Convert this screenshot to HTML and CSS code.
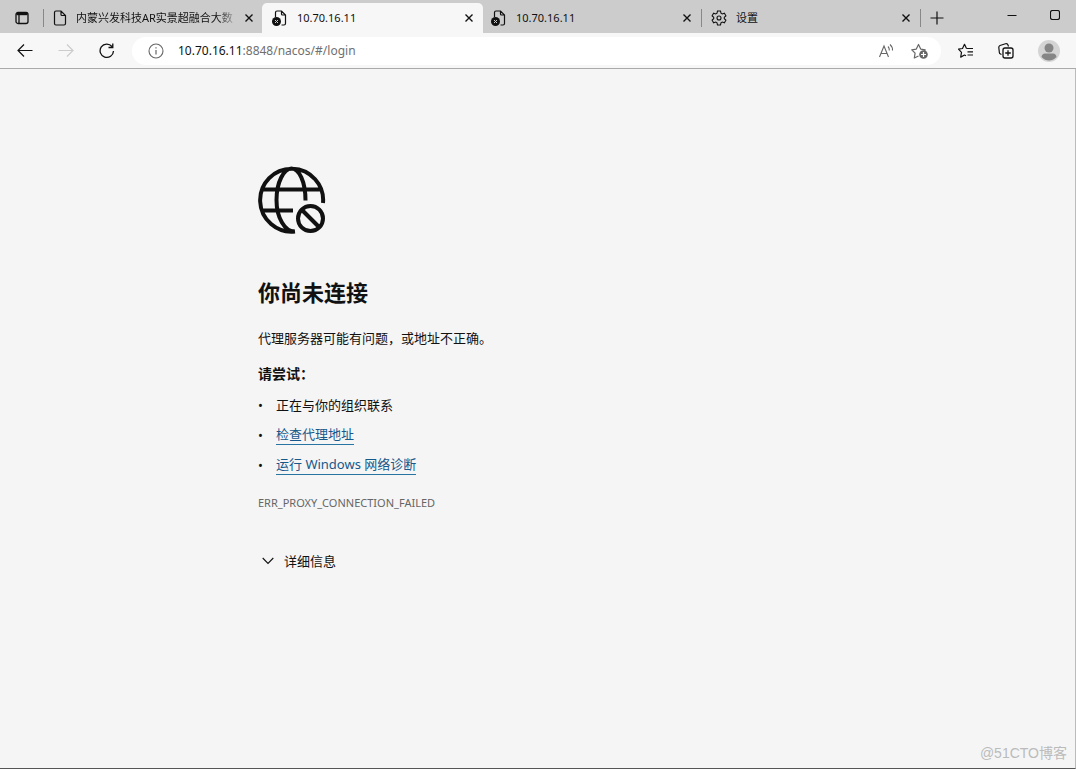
FILE: index.html
```html
<!DOCTYPE html>
<html lang="zh-CN">
<head>
<meta charset="utf-8">
<meta name="viewport" content="width=device-width, initial-scale=1">
<title>10.70.16.11</title>
<link rel="stylesheet" href="styles.css">
</head>
<body>
<svg class="defs" aria-hidden="true">
  <symbol id="close" viewBox="0 0 10 10"><path d="M1.500 1.500l7 7M8.500 1.500l-7 7" stroke-width="1.400"/></symbol>
  <symbol id="blocked-page" viewBox="0 0 16 16">
    <path d="M3.500 7V2.500a1.500 1.500 0 0 1 1.500-1.500h4.500l4 4v8.500a1.500 1.500 0 0 1-1.500 1.500H9.500M9.500 1v3a1 1 0 0 0 1 1h3" stroke-width="1.200"/>
    <circle cx="4.500" cy="11.500" r="4.500" fill="#111" stroke="none"/><path d="M3 10l3 3M6 10l-3 3" stroke="#ccc" stroke-width="1"/>
  </symbol>
</svg>
<header>
  <div class="tabbar">
    <button class="tab-menu" aria-label="标签操作"><svg width="14" height="14" viewBox="0 0 14 14"><rect x="1" y="1.500" width="12" height="11" rx="2" stroke-width="1.300"/><path d="M1.500 3h11" stroke-width="2.400"/><path d="M4 4v8" stroke-width="1.300"/></svg></button>
    <div class="tab first">
      <svg width="16" height="16" viewBox="0 0 16 16"><path d="M4 1h5l4.500 4.500v8A1.500 1.500 0 0 1 12 15H4a1.500 1.500 0 0 1-1.500-1.500v-11A1.500 1.500 0 0 1 4 1zM9 1v3.500a1 1 0 0 0 1 1h3.500" stroke-width="1.200"/></svg>
      <span class="tab-title faded">内蒙兴发科技AR实景超融合大数</span>
      <button class="close" aria-label="关闭"><svg width="10" height="10"><use href="#close"/></svg></button>
    </div>
    <div class="tab active">
      <svg width="16" height="16"><use href="#blocked-page"/></svg>
      <span class="tab-title">10.70.16.11</span>
      <button class="close" aria-label="关闭"><svg width="10" height="10"><use href="#close"/></svg></button>
    </div>
    <div class="tab after-active">
      <svg width="16" height="16"><use href="#blocked-page"/></svg>
      <span class="tab-title">10.70.16.11</span>
      <button class="close" aria-label="关闭"><svg width="10" height="10"><use href="#close"/></svg></button>
    </div>
    <div class="tab divided">
      <svg width="16" height="16" viewBox="0 0 16 16"><path d="M6.500 1h3l.5 2.100 1.300.8 2.100-.7 1.500 2.600-1.600 1.500v1.400l1.600 1.500-1.500 2.600-2.100-.7-1.300.8-.5 2.100h-3L6 12.900l-1.300-.8-2.100.7-1.500-2.600 1.600-1.500V7.300L1.100 5.800l1.500-2.600 2.100.7L6 3.100z" stroke-width="1.100"/><circle cx="8" cy="8" r="2" stroke-width="1.100"/></svg>
      <span class="tab-title">设置</span>
      <button class="close" aria-label="关闭"><svg width="10" height="10"><use href="#close"/></svg></button>
    </div>
    <button class="new-tab" aria-label="新建标签页"><svg width="14" height="14" viewBox="0 0 14 14"><path d="M7 .5v13M.5 7h13" stroke-width="1.200"/></svg></button>
    <div class="window-controls">
      <button aria-label="最小化"><svg width="10" height="10" viewBox="0 0 10 10"><path d="M.5 5.500h9" stroke-width="1"/></svg></button>
      <button aria-label="最大化"><svg width="10" height="10" viewBox="0 0 10 10"><rect x=".5" y=".5" width="9" height="9" rx="2" stroke-width="1.100"/></svg></button>
    </div>
  </div>
  <div class="toolbar">
    <nav class="history">
      <button aria-label="后退"><svg width="16" height="16" viewBox="0 0 16 16"><path d="M15.500 7.500H1M7 1.500l-6 6 6 6" stroke-width="1.200"/></svg></button>
      <button aria-label="前进" disabled><svg width="16" height="16" viewBox="0 0 16 16"><path d="M.5 7.500H15M9 1.500l6 6-6 6" stroke-width="1.200"/></svg></button>
      <button aria-label="刷新"><svg width="16" height="16" viewBox="0 0 16 16"><path d="M14.500 8A6.700 6.700 0 1 1 13 3.500M13.800.5v4H9.500" stroke-width="1.300"/></svg></button>
    </nav>
    <div class="address">
      <svg class="info" width="16" height="16" viewBox="0 0 16 16"><circle cx="8" cy="8" r="7" stroke-width="1.100"/><path d="M8 7v4.500M8 4.200v1.400" stroke-width="1.200"/></svg>
      <a class="url" href="#/login"><span class="host">10.70.16.11</span>:8848/nacos/#/login</a>
      <button aria-label="朗读此页"><svg width="16" height="16" viewBox="0 0 16 16"><path d="M1.500 14L6 3l4.500 11M3 10.500h6M10 3.500q1.500 1.500 1.300 4M12 1.500q2.800 2.500 2.500 6" stroke-width="1.100"/></svg></button>
      <button aria-label="收藏此页"><svg width="18" height="16" viewBox="0 0 18 16"><path d="M7.500 13L3.300 15l.8-4.800L.8 6.800l4.500-.7L7.500 1.500l2.200 4.600 4.500.7-1 1.200" stroke-width="1.200" stroke-linejoin="round"/><circle cx="12.500" cy="11.500" r="4.300" fill="#666" stroke="none"/><path d="M12.500 9v5M10 11.500h5" stroke="#fff" stroke-width="1.200"/></svg></button>
    </div>
    <div class="actions">
      <button aria-label="收藏夹"><svg width="16" height="16" viewBox="0 0 16 16"><path d="M8.500 5.500L6.500 1.300l-2 4.200-4 .7 3 3.100-.8 4.800 3.800-2.100 1.500.8M8.500 5.500H15M9.500 8.800H15M9.500 12H15" stroke-width="1.200" stroke-linejoin="round"/></svg></button>
      <button aria-label="集锦"><svg width="16" height="16" viewBox="0 0 16 16"><path d="M3.500 11.500L2.500 11A2 2 0 0 1 1.300 9L.8 4.500A2 2 0 0 1 2 2.500L7.500.8A2 2 0 0 1 10 2l.5 1.500" stroke-width="1.200"/><rect x="5" y="5" width="10" height="10" rx="2" stroke-width="1.300"/><path d="M10 7.200v5.600M7.200 10h5.600" stroke-width="1.300"/></svg></button>
      <button class="profile" aria-label="个人资料"><svg width="22" height="22" viewBox="0 0 22 22"><g stroke="none"><circle cx="11" cy="11" r="11" fill="#d4d4d4"/><circle cx="11" cy="8" r="4.500" fill="#858585"/><path d="M3.500 17Q4 13.500 7 13.500h8q3 0 3.500 3.500Q15 20.500 11 20.500T3.500 17z" fill="#858585"/></g></svg></button>
    </div>
  </div>
</header>
<main>
  <section class="error">
    <svg class="globe" width="68" height="68" viewBox="0 0 68 68">
      <path d="M65 37A31.500 31.500 0 1 0 37 65.500M4 23.500h60M4 44.500h31M36.500 65.500C27 65.500 18.500 52 18.500 34S26 2.500 33.500 2.500c7.500 0 14 13 14 32" stroke-width="4"/>
      <circle cx="52.500" cy="52.500" r="12.500" stroke-width="4"/><path d="M43.500 43.500l18 18" stroke-width="4"/>
    </svg>
    <h1>你尚未连接</h1>
    <p class="summary">代理服务器可能有问题，或地址不正确。</p>
    <h2>请尝试：</h2>
    <ul>
      <li>正在与你的组织联系</li>
      <li><a href="#proxy">检查代理地址</a></li>
      <li><a href="#diagnose">运行 Windows 网络诊断</a></li>
    </ul>
    <p class="code">ERR_PROXY_CONNECTION_FAILED</p>
    <button class="details"><svg width="12" height="8" viewBox="0 0 12 8"><path d="M.7 1L6 6.500 11.300 1" stroke-width="1.100"/></svg>详细信息</button>
  </section>
  <p class="watermark">@51CTO博客</p>
</main>
</body>
</html>
```

FILE: styles.css
```css
* { box-sizing: border-box; }
body {
  margin: 0;
  min-height: 100vh;
  display: flex;
  flex-direction: column;
  background: #f5f5f5;
  color: #111;
  font: 13px/20px "Noto Sans", "Noto Sans CJK SC", sans-serif;
}
svg { display: block; flex: none; fill: none; stroke: currentColor; }
.defs { position: absolute; width: 0; height: 0; }
button {
  display: flex;
  align-items: center;
  justify-content: center;
  flex: none;
  padding: 0;
  border: 0;
  background: none;
  color: inherit;
  font: inherit;
}
h1, h2, p, ul { margin: 0; padding: 0; }

.tabbar { display: flex; height: 33px; padding-top: 3px; background: #ccc; }
.tab-menu { width: 43px; }
.tab {
  display: flex;
  align-items: center;
  flex: 0 1 219px;
  min-width: 0;
  gap: 9px;
  padding: 0 8px 0 10px;
  font-size: 11px;
}
.tab.first, .tab.divided {
  background: linear-gradient(#888, #888) left center / 1px 18px no-repeat;
}
.tab.first { gap: 8px; padding: 0 7px 0 9px; }
.tab.active { flex-basis: 221px; background: #f7f7f7; border-radius: 5px 5px 0 0; }
.tab.after-active { flex-basis: 218px; padding-left: 8px; }
.tab-title { flex: 1; min-width: 0; overflow: hidden; white-space: nowrap; }
.faded { mask-image: linear-gradient(to right, #000 88%, rgba(0, 0, 0, 0.2)); }
.close { width: 12px; height: 20px; }
.new-tab {
  width: 34px;
  background: linear-gradient(#888, #888) left center / 1px 18px no-repeat;
}
.window-controls { display: flex; height: 24px; margin-left: auto; }
.window-controls button { width: 43px; }

.toolbar {
  display: flex;
  align-items: center;
  height: 36px;
  background: #f7f7f7;
  border-bottom: 1px solid #aaa;
}
.history { display: flex; width: 132px; padding-left: 4px; }
.history button { width: 41px; height: 28px; }
.history button:disabled { color: #ccc; }
.address {
  display: flex;
  align-items: center;
  flex: 1;
  min-width: 0;
  height: 28px;
  padding: 0 12px 0 16px;
  border-radius: 14px;
  background: #fff;
  color: #666;
}
.url {
  flex: 1;
  min-width: 0;
  overflow: hidden;
  margin-left: 14px;
  color: #707070;
  font-size: 12px;
  text-decoration: none;
  white-space: nowrap;
}
.host { color: #111; }
.address button { margin-left: 17px; }
.actions { display: flex; align-items: center; gap: 24px; padding: 0 16px 0 17px; }

main {
  display: flex;
  flex: 1;
  flex-direction: column;
  border-right: 1px solid #bbb;
  border-bottom: 1px solid #555;
}
.error { margin-left: 24%; padding-top: 97px; }
h1 { margin-top: 42px; font-size: 22px; line-height: 32px; }
.summary { margin-top: 20px; }
h2 { margin-top: 16px; font-size: 14px; line-height: 20px; }
ul { margin-top: 11px; list-style: none; }
li { display: flex; margin-bottom: 10px; }
li::before { content: "•"; width: 18px; font-size: 13px; }
li a { color: #15588b; line-height: 18px; border-bottom: 1px solid #2874a2; text-decoration: none; }
.code { margin-top: 18px; color: #666; font-size: 11px; }
.details { gap: 10px; margin: 38px 0 0 4px; }
.watermark {
  margin-top: auto;
  padding: 0 8px 5px 0;
  color: #bbb;
  font-family: "Liberation Sans", "Noto Sans CJK SC", sans-serif;
  font-size: 14px;
  text-align: right;
}
```
